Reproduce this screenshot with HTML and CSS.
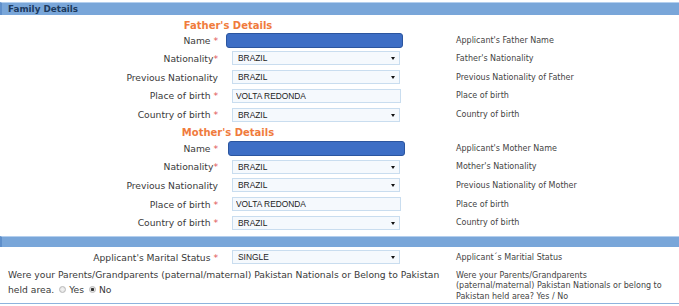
FILE: index.html
```html
<!DOCTYPE html>
<html lang="en">

<head>
    <meta charset="UTF-8">
    <meta name="viewport" content="width=device-width, initial-scale=1.0">
    <title>Family Details</title>
    <link rel="stylesheet" href="styles.css">
</head>

<body>
    <!-- section header -->
    <div class="section-bar">Family Details</div>

    <div class="form">
        <!-- father -->
        <div class="heading first">Father's Details</div>
        <div class="row name-row">
            <div class="lbl">Name <span class="req">*</span></div>
            <div class="field"><input class="name-input" type="text"></div>
            <div class="help">Applicant's Father Name</div>
        </div>
        <div class="row">
            <div class="lbl">Nationality<span class="req">*</span></div>
            <div class="field"><span class="select-wrap"><select><option>BRAZIL</option></select></span></div>
            <div class="help">Father's Nationality</div>
        </div>
        <div class="row">
            <div class="lbl">Previous Nationality</div>
            <div class="field"><span class="select-wrap"><select><option>BRAZIL</option></select></span></div>
            <div class="help">Previous Nationality of Father</div>
        </div>
        <div class="row">
            <div class="lbl">Place of birth <span class="req">*</span></div>
            <div class="field"><input class="text-input" type="text" value="VOLTA REDONDA"></div>
            <div class="help">Place of birth</div>
        </div>
        <div class="row">
            <div class="lbl">Country of birth <span class="req">*</span></div>
            <div class="field"><span class="select-wrap"><select><option>BRAZIL</option></select></span></div>
            <div class="help">Country of birth</div>
        </div>

        <!-- mother -->
        <div class="heading">Mother's Details</div>
        <div class="row name-row mother">
            <div class="lbl">Name <span class="req">*</span></div>
            <div class="field"><input class="name-input" type="text"></div>
            <div class="help">Applicant's Mother Name</div>
        </div>
        <div class="row">
            <div class="lbl">Nationality<span class="req">*</span></div>
            <div class="field"><span class="select-wrap"><select><option>BRAZIL</option></select></span></div>
            <div class="help">Mother's Nationality</div>
        </div>
        <div class="row">
            <div class="lbl">Previous Nationality</div>
            <div class="field"><span class="select-wrap"><select><option>BRAZIL</option></select></span></div>
            <div class="help">Previous Nationality of Mother</div>
        </div>
        <div class="row">
            <div class="lbl">Place of birth <span class="req">*</span></div>
            <div class="field"><input class="text-input" type="text" value="VOLTA REDONDA"></div>
            <div class="help">Place of birth</div>
        </div>
        <div class="row">
            <div class="lbl">Country of birth <span class="req">*</span></div>
            <div class="field"><span class="select-wrap"><select><option>BRAZIL</option></select></span></div>
            <div class="help">Country of birth</div>
        </div>
    </div>

    <div class="section-bar empty"></div>

    <div class="form">
        <div class="row marital">
            <div class="lbl">Applicant's Marital Status <span class="req">*</span></div>
            <div class="field"><span class="select-wrap"><select><option>SINGLE</option></select></span></div>
            <div class="help">Applicant´s Maritial Status</div>
        </div>
        <div class="row question">
            <div class="question-text"><span>Were your Parents/Grandparents (paternal/maternal) Pakistan Nationals or Belong to Pakistan held area.</span>
                <span class="choice"><input class="radio" type="radio" name="pk" id="pk-yes"><label for="pk-yes">Yes</label></span>
                <span class="choice"><input class="radio" type="radio" name="pk" id="pk-no" checked><label for="pk-no">No</label></span>
            </div>
            <div class="help">Were your Parents/Grandparents (paternal/maternal) Pakistan Nationals or belong to Pakistan held area? Yes / No</div>
        </div>
    </div>
</body>

</html>
```

FILE: styles.css
```css
/* page */
body {
    margin: 0;
    padding: 0;
    font-family: "DejaVu Sans", Verdana, sans-serif;
    font-size: 9.2px;
    color: #3a3a3a;
    background: #fff;
}

/* blue section bars */
.section-bar {
    margin-top: 2px;
    height: 12px;
    line-height: 12px;
    padding-left: 6px;
    background: #79a6d9;
    border-top: 1px solid #b4cfee;
    border-left: 2px solid #5f8fca;
    font-size: 8.8px;
    font-weight: bold;
    color: #1d3a5e;
}

.section-bar.empty {
    margin-top: 4px;
    height: 10px;
}

/* form grid */
.row {
    display: grid;
    grid-template-columns: 222px 234px 1fr;
    align-items: center;
    height: 18.8px;
}

.name-row {
    height: 17px;
}

.heading {
    width: 456px;
    height: 16px;
    line-height: 18px;
    text-align: center;
    font-size: 10px;
    font-weight: bold;
    color: #f07b3c;
}

.heading.first {
    height: 17px;
    line-height: 21px;
}

.lbl {
    text-align: right;
    padding-right: 4px;
    white-space: nowrap;
}

.req {
    color: #e0545a;
}

.help {
    font-size: 8px;
    color: #444;
}

/* inputs */
.field {
    display: flex;
}

.name-input {
    box-sizing: border-box;
    width: 177px;
    height: 15px;
    margin: 0 0 0 4px;
    background: #3d6ec5;
    border: 1px solid #2b559f;
    border-radius: 3px;
    outline: none;
}

.mother .name-input {
    margin-left: 6px;
}

.text-input,
.select-wrap select {
    box-sizing: border-box;
    width: 169px;
    height: 14px;
    margin: 0;
    padding: 0 0 0 3px;
    font-family: "Liberation Sans", Arial, sans-serif;
    font-size: 8.4px;
    color: #222;
    background: #f5f9fd;
    border: 1px solid #c9ddef;
    border-radius: 0;
    outline: none;
}

.text-input {
    margin-left: 10px;
}

.select-wrap {
    position: relative;
    display: inline-block;
    margin-left: 10px;
}

.select-wrap select {
    display: block;
    appearance: none;
    -webkit-appearance: none;
    width: 168px;
    padding-left: 5px;
}

/* dropdown arrow */
.select-wrap::after {
    content: "";
    position: absolute;
    right: 5px;
    top: 6px;
    border-left: 2px solid transparent;
    border-right: 2px solid transparent;
    border-top: 3px solid #111;
}

/* marital + question rows */
.marital {
    height: 20px;
}

.question {
    align-items: start;
    height: 36px;
    border-bottom: 1px solid #8db3dd;
}

.question-text {
    grid-column: 1 / 3;
    padding: 0 6px 0 8px;
    line-height: 15px;
}

.question .help {
    width: 208px;
    padding-top: 3.5px;
    line-height: 10.5px;
}

.choice {
    white-space: nowrap;
}

.radio {
    appearance: none;
    -webkit-appearance: none;
    width: 7px;
    height: 7px;
    margin: 0 3px 0 2px;
    vertical-align: 0;
    border: 1px solid #b8b8b8;
    border-radius: 50%;
    background: radial-gradient(circle, #f4f4f4 0, #dedede 100%);
}

.radio:checked {
    background: radial-gradient(circle, #333 0, #333 1.3px, #e6e6e6 2px);
}
```
